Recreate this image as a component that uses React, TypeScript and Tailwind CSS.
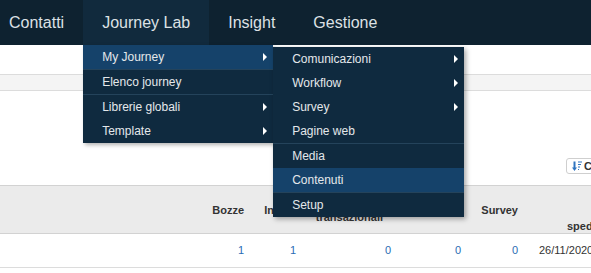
import React from "react";

const Arrow = () => (
  <span className="w-0 h-0 border-y-[4px] border-y-transparent border-l-[4px] border-l-white" />
);

type Item = { label: string; sub?: boolean; active?: boolean; sep?: boolean };

const MenuItem = ({ item }: { item: Item }) => (
  <div
    className={`flex items-center justify-between h-[24px] pl-[19px] pr-[6px] box-content ${
      item.active ? "bg-[#15426a]" : ""
    } ${item.sep ? "border-b border-[#24435b]" : ""}`}
  >
    <span>{item.label}</span>
    {item.sub && <Arrow />}
  </div>
);

const journeyItems: Item[] = [
  { label: "Comunicazioni", sub: true },
  { label: "Workflow", sub: true },
  { label: "Survey", sub: true },
  { label: "Pagine web", sep: true },
  { label: "Media" },
  { label: "Contenuti", active: true, sep: true },
  { label: "Setup" },
];

const labItems: Item[] = [
  { label: "Elenco journey", sep: true },
  { label: "Librerie globali", sub: true },
  { label: "Template", sub: true },
];

const SortIcon = () => (
  <svg width="10" height="11" viewBox="0 0 10 11">
    <path d="M2.5 0.5v7" stroke="#2f74c0" strokeWidth="2" />
    <path d="M0 6.5h5l-2.5 3.5z" fill="#2f74c0" />
    <path d="M6 1h4M6 3.5h3M6 6h2M6 8.5h1" stroke="#2f74c0" strokeWidth="1.2" />
  </svg>
);

export default function App() {
  return (
    <div className="w-full h-[273px] overflow-hidden bg-white font-['Liberation_Sans',Arial,sans-serif]">
      <nav className="relative z-20 flex h-[45px] bg-[#0e2230] text-[16px] text-[#dde1e5]">
        <div className="flex items-center pl-[9px] pr-[19px]">Contatti</div>
        <div className="relative flex items-center px-[19px] bg-[#112a3d]">
          Journey Lab
          <div className="absolute top-full left-0 w-[190px] bg-[#0f2a3f] text-[12px] text-[#e4e8eb] shadow-[2px_2px_4px_rgba(0,0,0,0.3)]">
            <div className="relative">
              <MenuItem item={{ label: "My Journey", sub: true, active: true, sep: true }} />
              <div className="absolute left-full top-[2px] w-[191px] bg-[#0f2a3f] shadow-[2px_2px_5px_rgba(0,0,0,0.35)]">
                {journeyItems.map((it) => (
                  <MenuItem key={it.label} item={it} />
                ))}
              </div>
            </div>
            {labItems.map((it) => (
              <MenuItem key={it.label} item={it} />
            ))}
          </div>
        </div>
        <div className="flex items-center px-[19px]">Insight</div>
        <div className="flex items-center px-[19px]">Gestione</div>
      </nav>

      <div className="h-[29px]" />
      <div className="h-[17px] border-y border-[#dcdcdc] bg-[#f4f4f4]" />
      <div className="h-[94px] pt-[67px] pl-[566px]">
        <div className="flex items-center gap-[2px] w-[60px] h-[16px] pl-[5px] border border-[#cfcfcf] rounded-[3px] text-[11px] font-bold text-[#333]">
          <SortIcon />
          <span>Carica</span>
        </div>
      </div>

      <div className="w-[640px] text-[11px]">
        <div className="grid grid-cols-[200px_48px_52px_95px_70px_57px_118px] h-[49px] border-y border-[#d2d2d2] bg-[#ebebeb] font-bold text-[#333] leading-[15px]">
          <div />
          <div className="flex items-center justify-end pr-[4px]">Bozze</div>
          <div className="flex items-center justify-end pr-[4px]">Inviati</div>
          <div className="flex items-center justify-end pr-[12px] text-right">
            Invii
            <br />
            transazionali
          </div>
          <div className="flex items-center justify-end pr-[4px]">Workflow</div>
          <div className="flex items-center justify-end pr-[4px]">Survey</div>
          <div className="flex flex-col justify-center pl-[45px] leading-[16px]">
            <span className="pl-[40px]">Data</span>
            <span className="pl-[40px]">ultima</span>
            <span>spedizione</span>
          </div>
        </div>
        <div className="grid grid-cols-[200px_48px_52px_95px_70px_57px_118px] h-[34px] border-b border-[#dcdcdc] text-[#2a6cb4]">
          <div />
          <div className="flex items-center justify-end pr-[4px]">1</div>
          <div className="flex items-center justify-end pr-[4px]">1</div>
          <div className="flex items-center justify-end pr-[4px]">0</div>
          <div className="flex items-center justify-end pr-[4px]">0</div>
          <div className="flex items-center justify-end pr-[4px]">0</div>
          <div className="flex items-center pl-[17px] text-[#333]">26/11/2020 10:12</div>
        </div>
      </div>
    </div>
  );
}
